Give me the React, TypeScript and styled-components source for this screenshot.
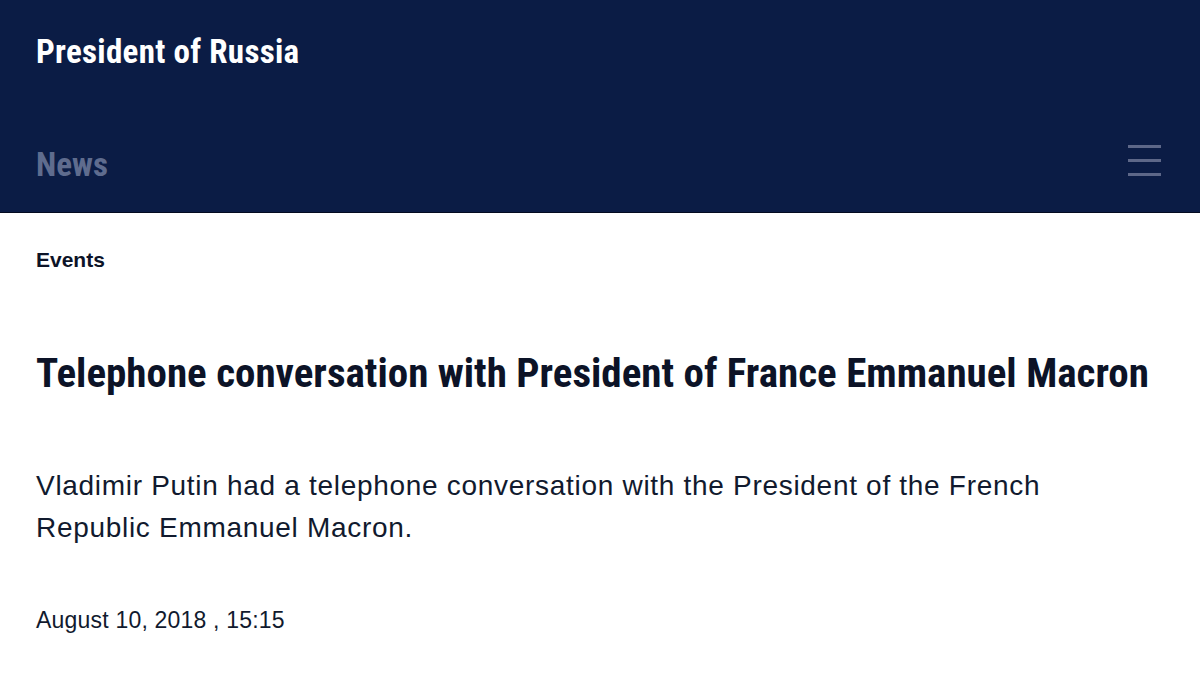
import React from "react";
import styled, { createGlobalStyle } from "styled-components";

const NAVY = "#0b1c45";
const INK = "#0c1327";
const CONDENSED = `"Roboto Condensed", "Roboto", "Liberation Sans", sans-serif`;
const TEXT = `"Liberation Sans", Arial, sans-serif`;

const GlobalStyle = createGlobalStyle`
  html, body {
    margin: 0;
    padding: 0;
    background: #ffffff;
  }
  body {
    font-family: ${TEXT};
    color: ${INK};
  }
`;

const Page = styled.div`
  width: 1200px;
  height: 675px;
  overflow: hidden;
  background: #ffffff;
`;

const Header = styled.header`
  height: 213px;
  background: ${NAVY};
  border-bottom: 1px solid #040b20;
  box-sizing: border-box;
  padding: 32px 36px 0 36px;
`;

const SiteTitle = styled.div`
  font-family: ${CONDENSED};
  font-size: 33px;
  font-weight: 700;
  letter-spacing: 0.3px;
  color: #ffffff;
  line-height: 40px;
`;

const NavRow = styled.nav`
  margin-top: 73px;
  display: flex;
  align-items: flex-start;
  justify-content: space-between;
`;

const Section = styled.div`
  font-family: ${CONDENSED};
  font-size: 33px;
  font-weight: 700;
  line-height: 40px;
  color: #5f6c8e;
`;

const Burger = styled.button`
  width: 33px;
  padding: 0;
  margin: 0 3px 0 0;
  border: none;
  background: transparent;
  display: flex;
  flex-direction: column;
  gap: 11px;
  cursor: pointer;
`;

const BurgerLine = styled.span`
  display: block;
  width: 33px;
  height: 3px;
  background: #5d6788;
`;

const Article = styled.main`
  padding: 0 36px;
`;

const Category = styled.div`
  margin-top: 35px;
  font-size: 21px;
  font-weight: 700;
  line-height: 24px;
`;

const Title = styled.h1`
  margin: 76px 0 0 0;
  font-family: ${CONDENSED};
  font-size: 41px;
  font-weight: 700;
  line-height: 50px;
  white-space: nowrap;
  color: ${INK};
`;

const Lead = styled.p`
  margin: 67px 0 0 0;
  font-size: 28px;
  font-weight: 400;
  line-height: 42px;
  letter-spacing: 0.7px;
  max-width: 1060px;
  color: #111a2e;
`;

const DateLine = styled.div`
  margin-top: 57px;
  font-size: 23px;
  line-height: 28px;
  letter-spacing: 0.2px;
  color: #111a2e;
`;

export default function App() {
  return (
    <Page>
      <GlobalStyle />
      <Header>
        <SiteTitle>President of Russia</SiteTitle>
        <NavRow>
          <Section>News</Section>
          <Burger aria-label="Menu">
            <BurgerLine />
            <BurgerLine />
            <BurgerLine />
          </Burger>
        </NavRow>
      </Header>
      <Article>
        <Category>Events</Category>
        <Title>Telephone conversation with President of France Emmanuel Macron</Title>
        <Lead>
          Vladimir Putin had a telephone conversation with the President of the French
          Republic Emmanuel Macron.
        </Lead>
        <DateLine>August 10, 2018 , 15:15</DateLine>
      </Article>
    </Page>
  );
}
